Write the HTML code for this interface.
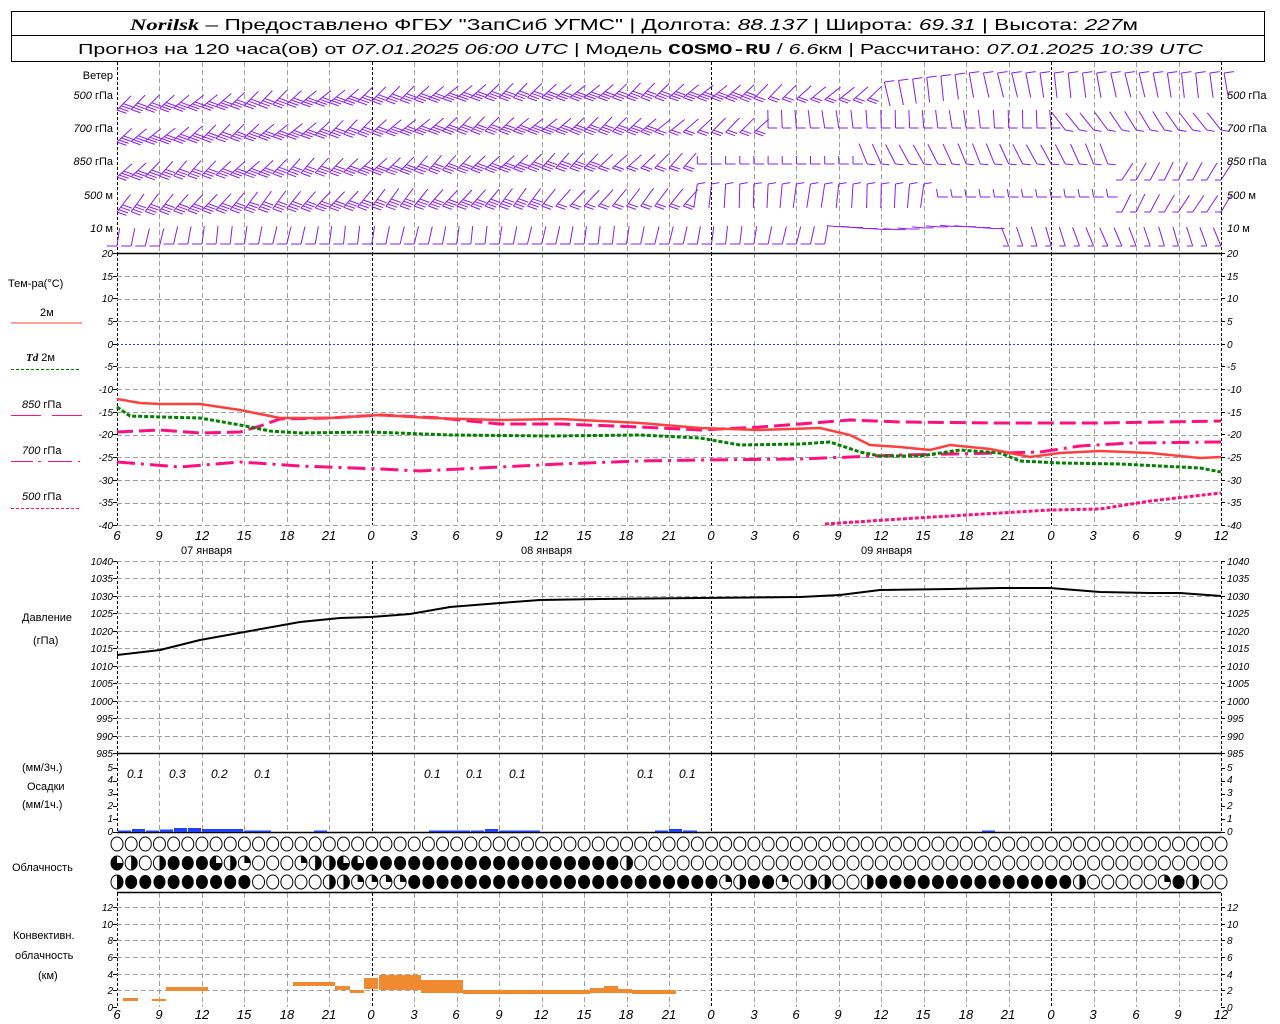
<!DOCTYPE html>
<html><head><meta charset="utf-8">
<style>
html,body{margin:0;padding:0;background:#fff;}
svg{display:block;}
text{font-family:"Liberation Sans","DejaVu Sans",sans-serif;fill:#000;}
.ax{font-size:10px;font-style:italic;}
.lb{font-size:11px;}
.xl{font-size:13px;font-style:italic;}
</style></head>
<body>
<svg id="s" width="1280" height="1024" viewBox="0 0 1280 1024" xmlns="http://www.w3.org/2000/svg">
<rect x="0" y="0" width="1280" height="1024" fill="#fff"/>
<g id="grid"></g>
<g id="data"></g>
<!-- title -->
<rect x="11.5" y="11.5" width="1253" height="50" fill="none" stroke="#000"/>
<line x1="11" y1="35.5" x2="1265" y2="35.5" stroke="#000"/>
<text x="130" y="30" font-size="16" textLength="1008" lengthAdjust="spacingAndGlyphs"><tspan font-family="Liberation Serif" font-style="italic" font-weight="bold">Norilsk</tspan> – Предоставлено ФГБУ "ЗапСиб УГМС" | Долгота: <tspan font-style="italic">88.137</tspan> | Широта: <tspan font-style="italic">69.31</tspan> | Высота: <tspan font-style="italic">227</tspan>м</text>
<text x="78" y="54" font-size="15" textLength="1125" lengthAdjust="spacingAndGlyphs">Прогноз на 120 часа(ов) от <tspan font-style="italic">07.01.2025 06:00 UTC</tspan>  | Модель <tspan font-family="Liberation Mono" font-weight="bold">COSMO-RU</tspan> / <tspan font-style="italic">6.6</tspan>км | Рассчитано: <tspan font-style="italic">07.01.2025 10:39 UTC</tspan></text>

<!-- wind labels -->
<g class="lb">
<text x="113" y="79" text-anchor="end">Ветер</text>
<text x="113" y="99" text-anchor="end"><tspan font-style="italic">500</tspan> гПа</text>
<text x="113" y="132" text-anchor="end"><tspan font-style="italic">700</tspan> гПа</text>
<text x="113" y="165" text-anchor="end"><tspan font-style="italic">850</tspan> гПа</text>
<text x="113" y="199" text-anchor="end"><tspan font-style="italic">500</tspan>  м</text>
<text x="113" y="232" text-anchor="end"><tspan font-style="italic">10</tspan>   м</text>
<text x="1227" y="99"><tspan font-style="italic">500</tspan> гПа</text>
<text x="1227" y="132"><tspan font-style="italic">700</tspan> гПа</text>
<text x="1227" y="165"><tspan font-style="italic">850</tspan> гПа</text>
<text x="1227" y="199"><tspan font-style="italic">500</tspan>  м</text>
<text x="1227" y="232"><tspan font-style="italic">10</tspan>   м</text>
</g>
<!-- temp axis labels -->
<g class="ax">
<text x="113" y="257" text-anchor="end">20</text><text x="113" y="280" text-anchor="end">15</text><text x="113" y="302" text-anchor="end">10</text><text x="113" y="325" text-anchor="end">5</text><text x="113" y="348" text-anchor="end">0</text><text x="113" y="370" text-anchor="end">-5</text><text x="113" y="393" text-anchor="end">-10</text><text x="113" y="416" text-anchor="end">-15</text><text x="113" y="438" text-anchor="end">-20</text><text x="113" y="461" text-anchor="end">-25</text><text x="113" y="484" text-anchor="end">-30</text><text x="113" y="506" text-anchor="end">-35</text><text x="113" y="529" text-anchor="end">-40</text>
<text x="1227" y="257">20</text><text x="1227" y="280">15</text><text x="1227" y="302">10</text><text x="1227" y="325">5</text><text x="1227" y="348">0</text><text x="1227" y="370">-5</text><text x="1227" y="393">-10</text><text x="1227" y="416">-15</text><text x="1227" y="438">-20</text><text x="1227" y="461">-25</text><text x="1227" y="484">-30</text><text x="1227" y="506">-35</text><text x="1227" y="529">-40</text>
<!-- pressure -->
<text x="113" y="565" text-anchor="end">1040</text><text x="113" y="582" text-anchor="end">1035</text><text x="113" y="600" text-anchor="end">1030</text><text x="113" y="617" text-anchor="end">1025</text><text x="113" y="635" text-anchor="end">1020</text><text x="113" y="652" text-anchor="end">1015</text><text x="113" y="670" text-anchor="end">1010</text><text x="113" y="687" text-anchor="end">1005</text><text x="113" y="705" text-anchor="end">1000</text><text x="113" y="722" text-anchor="end">995</text><text x="113" y="740" text-anchor="end">990</text><text x="113" y="757" text-anchor="end">985</text>
<text x="1227" y="565">1040</text><text x="1227" y="582">1035</text><text x="1227" y="600">1030</text><text x="1227" y="617">1025</text><text x="1227" y="635">1020</text><text x="1227" y="652">1015</text><text x="1227" y="670">1010</text><text x="1227" y="687">1005</text><text x="1227" y="705">1000</text><text x="1227" y="722">995</text><text x="1227" y="740">990</text><text x="1227" y="757">985</text>
<!-- precip -->
<text x="113" y="771" text-anchor="end">5</text><text x="113" y="783" text-anchor="end">4</text><text x="113" y="796" text-anchor="end">3</text><text x="113" y="809" text-anchor="end">2</text><text x="113" y="822" text-anchor="end">1</text><text x="113" y="835" text-anchor="end">0</text>
<text x="1227" y="771">5</text><text x="1227" y="783">4</text><text x="1227" y="796">3</text><text x="1227" y="809">2</text><text x="1227" y="822">1</text><text x="1227" y="835">0</text>
<!-- conv -->
<text x="113" y="911" text-anchor="end">12</text><text x="113" y="928" text-anchor="end">10</text><text x="113" y="944" text-anchor="end">8</text><text x="113" y="961" text-anchor="end">6</text><text x="113" y="978" text-anchor="end">4</text><text x="113" y="994" text-anchor="end">2</text><text x="113" y="1011" text-anchor="end">0</text>
<text x="1227" y="911">12</text><text x="1227" y="928">10</text><text x="1227" y="944">8</text><text x="1227" y="961">6</text><text x="1227" y="978">4</text><text x="1227" y="994">2</text><text x="1227" y="1011">0</text>
</g>
<!-- x labels -->
<g class="xl" text-anchor="middle">
<text x="117" y="540">6</text><text x="159" y="540">9</text><text x="202" y="540">12</text><text x="244" y="540">15</text><text x="287" y="540">18</text><text x="329" y="540">21</text><text x="371" y="540">0</text><text x="414" y="540">3</text><text x="456" y="540">6</text><text x="499" y="540">9</text><text x="541" y="540">12</text><text x="584" y="540">15</text><text x="626" y="540">18</text><text x="669" y="540">21</text><text x="711" y="540">0</text><text x="754" y="540">3</text><text x="796" y="540">6</text><text x="838" y="540">9</text><text x="881" y="540">12</text><text x="923" y="540">15</text><text x="966" y="540">18</text><text x="1008" y="540">21</text><text x="1051" y="540">0</text><text x="1093" y="540">3</text><text x="1136" y="540">6</text><text x="1178" y="540">9</text><text x="1221" y="540">12</text>
<text x="117" y="1019">6</text><text x="159" y="1019">9</text><text x="202" y="1019">12</text><text x="244" y="1019">15</text><text x="287" y="1019">18</text><text x="329" y="1019">21</text><text x="371" y="1019">0</text><text x="414" y="1019">3</text><text x="456" y="1019">6</text><text x="499" y="1019">9</text><text x="541" y="1019">12</text><text x="584" y="1019">15</text><text x="626" y="1019">18</text><text x="669" y="1019">21</text><text x="711" y="1019">0</text><text x="754" y="1019">3</text><text x="796" y="1019">6</text><text x="838" y="1019">9</text><text x="881" y="1019">12</text><text x="923" y="1019">15</text><text x="966" y="1019">18</text><text x="1008" y="1019">21</text><text x="1051" y="1019">0</text><text x="1093" y="1019">3</text><text x="1136" y="1019">6</text><text x="1178" y="1019">9</text><text x="1221" y="1019">12</text>
</g>
<g class="lb" font-size="12">
<text x="181" y="554">07  января</text><text x="521" y="554">08  января</text><text x="861" y="554">09  января</text>
</g>
<!-- left legends -->
<g class="lb">
<text x="8" y="287">Тем-ра(°C)</text>
<text x="40" y="316">2м</text>
<line x1="11" y1="323" x2="82" y2="323" stroke="#ff4040"/>
<text x="26" y="361"><tspan font-style="italic" font-weight="bold" font-family="Liberation Serif">Td</tspan>  2м</text>
<line x1="11" y1="369.5" x2="79" y2="369.5" stroke="#008000" stroke-dasharray="3,2"/>
<text x="22" y="408"><tspan font-style="italic">850</tspan> гПа</text>
<line x1="11" y1="415.5" x2="41" y2="415.5" stroke="#ff1080"/><line x1="52" y1="415.5" x2="82" y2="415.5" stroke="#ff1080"/>
<text x="22" y="454"><tspan font-style="italic">700</tspan> гПа</text>
<path d="M11 461.5H33M38 461.5H41M48 461.5H72M78 461.5H80" stroke="#ff1080"/>
<text x="22" y="500"><tspan font-style="italic">500</tspan> гПа</text>
<line x1="11" y1="508.5" x2="79" y2="508.5" stroke="#ff1080" stroke-dasharray="3,2"/>
<text x="22" y="621">Давление</text>
<text x="33" y="644">(гПа)</text>
<text x="22" y="771">(мм/3ч.)</text>
<text x="27" y="790">Осадки</text>
<text x="22" y="808">(мм/1ч.)</text>
<text x="12" y="871">Облачность</text>
<text x="13" y="939">Конвективн.</text>
<text x="15" y="959">облачность</text>
<text x="38" y="979">(км)</text>
</g>
<g font-size="12" font-style="italic">
<text x="127" y="778">0.1</text><text x="169" y="778">0.3</text><text x="211" y="778">0.2</text><text x="254" y="778">0.1</text><text x="424" y="778">0.1</text><text x="466" y="778">0.1</text><text x="509" y="778">0.1</text><text x="637" y="778">0.1</text><text x="679" y="778">0.1</text>
</g>
</svg>
<script>
(function(){
var NS="http://www.w3.org/2000/svg";
var G=document.getElementById('grid'),D=document.getElementById('data');
function el(p,t,a){var e=document.createElementNS(NS,t);for(var k in a)e.setAttribute(k,a[k]);p.appendChild(e);return e;}
function X(h){return 117+h*1104/78;}
var segs=[[62,253],[253,525],[561,753],[753,832],[893,1007]];
for(var i=0;i<=26;i++){var x=Math.round(117+i*1104/26)+0.5;
 var day=(i==0||i==6||i==14||i==22||i==26);
 segs.forEach(function(s){el(G,'line',{x1:x,y1:s[0],x2:x,y2:s[1],stroke:day?'#000':'#a0a0a0','stroke-dasharray':day?'3,2':'5,3'});});
}
function hl(y,c,d){el(G,'line',{x1:117,y1:y,x2:1221,y2:y,stroke:c,'stroke-dasharray':d});}
for(var t=15;t>=-40;t-=5){var y=Math.round(344-t*4.533)+0.5; if(t==0)hl(y,'#2040ff','2,2'); else hl(y,'#a0a0a0','5,3');}
for(var p=1040;p>985;p-=5){hl(Math.round(561+(1040-p)*3.49)+0.5,'#a0a0a0','5,3');}
for(var k=2;k<=12;k+=2){hl(Math.round(1007-k*8.33)+0.5,'#a0a0a0','5,3');}
el(G,'line',{x1:117,y1:253.5,x2:1221,y2:253.5,stroke:'#000','stroke-width':1.5});
el(G,'line',{x1:117,y1:753.5,x2:1221,y2:753.5,stroke:'#000','stroke-width':1.5});
el(G,'line',{x1:117,y1:832.5,x2:1221,y2:832.5,stroke:'#000','stroke-width':1.5});
el(G,'line',{x1:117,y1:892.5,x2:1221,y2:892.5,stroke:'#000','stroke-width':1.5});
[[253,525,22.67],[561,753,17.45],[768,832,12.8],[907,1007,16.67]].forEach(function(a){for(var y=a[0];y<=a[1]+1;y+=a[2]){var yy=Math.round(y)+0.5;el(G,'line',{x1:113,y1:yy,x2:117,y2:yy,stroke:'#000'});el(G,'line',{x1:1221,y1:yy,x2:1225,y2:yy,stroke:'#000'});}});
function poly(pts,c,w,d){var s=pts.map(function(p){return p[0]+','+p[1];}).join(' ');var a={points:s,fill:'none',stroke:c,'stroke-width':w};if(d)a['stroke-dasharray']=d;el(D,'polyline',a);}
poly([[117,432],[160,430],[200,433],[240,432],[260,426],[280,419],[330,418],[380,415],[440,418],[500,424],[560,424],[640,427],[700,430],[760,427],[800,424],[850,420],[900,422],[1000,423],[1100,423],[1221,421]],'#ff1080',3,'16,6');
poly([[117,462],[180,467],[240,462],[300,466],[380,469],[420,471],[460,469],[500,467],[560,464],[640,461],[700,460],[800,459],[850,457],[900,455],[1000,453],[1040,452],[1080,446],[1130,443],[1221,442]],'#ff1080',3,'18,6,3,6');
poly([[825,524],[900,519],[1000,513],[1050,510],[1100,509],[1150,501],[1221,493]],'#ff1080',3,'4,2');
poly([[117,407],[130,416],[160,417],[200,418],[240,425],[270,431],[300,433],[371,432],[450,435],[550,436],[640,435],[700,438],[740,445],[800,444],[830,442],[860,452],[880,456],[920,456],[960,450],[1000,453],[1020,461],[1060,463],[1120,464],[1200,468],[1221,472]],'#008000',3,'4,2');
poly([[117,399],[140,403],[160,404],[200,404],[240,410],[280,418],[330,418],[380,415],[430,418],[500,420],[560,419],[640,423],[700,428],[760,430],[820,428],[850,435],[870,445],[900,447],[930,450],[950,445],[990,449],[1010,453],[1030,457],[1060,453],[1100,451],[1150,453],[1200,458],[1221,457]],'#ff4040',2.5);
poly([[117,655],[160,650],[200,640],[250,631],[300,622],[340,618],[371,617],[410,614],[450,607],[500,603],[540,600],[600,599],[700,598],[800,597],[840,595],[880,590],[950,589],[1000,588],[1050,588],[1100,592],[1150,593],[1180,593],[1221,596]],'#000',2);
[[117,131,1.5],[131,145,3],[145,159,1.5],[159,173,2.5],[173,187,4],[187,201,4],[201,243,3],[243,271,1.5],[313,327,1.5],[428,470,1.5],[470,484,1.5],[484,498,3],[498,540,1.5],[654,668,1.5],[668,682,3],[682,697,1.5],[981,995,1.5]].forEach(function(b){el(D,'rect',{x:b[0]+1,y:832-b[2],width:b[1]-b[0]-1,height:b[2],fill:'#2040ff'});});
[[123,138,998,1001],[152,166,999,1001],[166,208,987,991],[293,335,982,986],[335,350,986,990],[350,364,990,993],[364,378,978,989],[379,421,975,990],[421,463,980,993],[463,590,990,994],[590,604,988,993],[604,618,986,993],[618,632,989,993],[632,676,990,994]].forEach(function(b){el(D,'rect',{x:b[0],y:b[2],width:b[1]-b[0],height:b[3]-b[2],fill:'#f08a30'});});
var r2=[3,2,0,2,4,4,4,3,2,1,0,0,0,1,2,2,3,3,4,4,4,4,4,4,4,4,4,4,4,4,4,4,4,4,4,4,2];
var r3=[2,4,4,4,4,4,4,4,4,4,0,0,0,0,0,2,2,1,1,1,1,4,4,4,4,4,4,4,4,4,4,4,4,4,4,4,4,4,4,4,4,4,4,1,2,4,4,1,0,2,2,0,0,2,4,4,4,4,4,4,4,4,4,4,4,4,4,4,2,0,0,0,0,0,1,4,2,0,0];
function cloud(x,y,c){
 var rx=6,ry=7;
 if(c==4){el(D,'ellipse',{cx:x,cy:y,rx:rx,ry:ry,fill:'#000'});return;}
 el(D,'ellipse',{cx:x,cy:y,rx:rx,ry:ry,fill:'#fff',stroke:'#000'});
 if(c==1)el(D,'path',{d:'M'+x+' '+y+'V'+(y-ry)+'A'+rx+' '+ry+' 0 0 1 '+(x+rx)+' '+y+'Z',fill:'#000'});
 if(c==2)el(D,'path',{d:'M'+x+' '+(y-ry)+'A'+rx+' '+ry+' 0 0 1 '+x+' '+(y+ry)+'Z',fill:'#000'});
 if(c==3)el(D,'path',{d:'M'+x+' '+y+'H'+(x+rx)+'A'+rx+' '+ry+' 0 1 1 '+x+' '+(y-ry)+'Z',fill:'#000'});
}
for(var i=0;i<=78;i++){var x=X(i);cloud(x,844,0);cloud(x,863,r2[i]||0);cloud(x,882,r3[i]||0);}
var P='#8a1cf0';
function barb(x0,y0,ang,L,n,fa,fl){
 var a=ang*Math.PI/180,ux=Math.cos(a),uy=-Math.sin(a);
 var d='M'+x0.toFixed(1)+' '+y0.toFixed(1)+'l'+(ux*L).toFixed(1)+' '+(uy*L).toFixed(1);
 var b=fa*Math.PI/180,fx=Math.cos(b)*fl,fy=-Math.sin(b)*fl;
 for(var k=0;k<n;k++){var px=x0+ux*k*3,py=y0+uy*k*3;d+='M'+px.toFixed(1)+' '+py.toFixed(1)+'l'+fx.toFixed(1)+' '+fy.toFixed(1);}
 el(D,'path',{d:d,fill:'none',stroke:P,'stroke-width':1});
}
function wob(i,s){return Math.sin(i*0.7+s)*4;}
for(var i=0;i<=78;i++){var x=X(i);
 if(i<=53){var yb=110-Math.min(i,25)*0.5+Math.max(0,i-40)*0.2;barb(x,yb,42+wob(i,1),20,i<45?4:2,-20,10);}
 else barb(x+3,73+Math.max(0,60-i)*1.5,-80+wob(i,2),25,1,8,10);
 if(i<=45){var yb=142-Math.min(i,22)*0.5+Math.max(0,i-30)*0.1;barb(x,yb,42+wob(i,3),20,i<38?4:2,-20,10);}
 else if(i<=66) barb(x,128,95+wob(i,4),18,1,0,9);
 else barb(x,130,125+wob(i,4),22,1,-10,8);
 if(i<=40){var yb=177-Math.min(i,30)*0.3;barb(x,yb,45+wob(i,5),20,i<34?4:2,-20,10);}
 else if(i<=52) barb(x,164,90,8,1,0,10);
 else if(i<=70) barb(x,164,115+wob(i,6),22,1,-5,8);
 else barb(x,180,60+wob(i,6),20,1,180,6);
 if(i<=40){var yb=212-Math.min(i,20)*0.3;barb(x,yb,50+wob(i,7),22,i<30?4:2,-20,10);}
 else if(i<=57) barb(x,184,-95+wob(i,8),24,1,10,8);
 else if(i<=70) barb(x,197,100,8,1,0,10);
 else barb(x,212,60+wob(i,8),20,1,180,6);
 if(i<=50) barb(x,246-(i<4?0:2),80+wob(i,9),18,1,180,10);
 else if(i<=62) barb(x,228+wob(i,1)*0.4,175,12,1,0,10);
 else barb(x,246,110+wob(i,9),20,1,180,6);
}
})();
</script>
</body></html>
